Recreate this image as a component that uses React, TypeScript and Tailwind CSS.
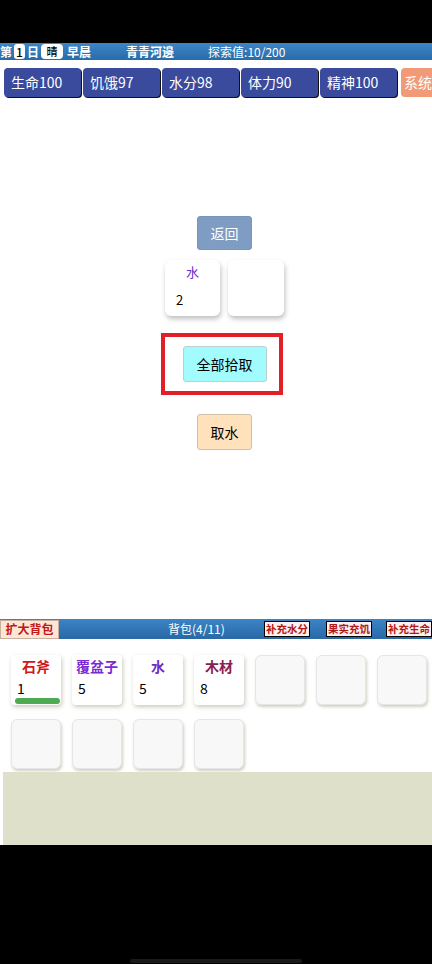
import React from 'react'

const stats = ['生命100', '饥饿97', '水分98', '体力90', '精神100']

const items = [
  { name: '石斧', count: 1, color: 'text-[#d01818]', bar: true },
  { name: '覆盆子', count: 5, color: 'text-[#7b2bd4]', bar: false },
  { name: '水', count: 5, color: 'text-[#6a2bc8]', bar: false },
  { name: '木材', count: 8, color: 'text-[#8a1f4f]', bar: false },
]

function EmptySlot() {
  return (
    <div className="h-[50px] w-[50px] shrink-0 rounded-[6px] border border-[#e6e6e6] bg-[#f8f8f8] shadow-[1px_2px_3px_rgba(150,150,120,0.45)]" />
  )
}

function ToolButton({ label }: { label: string }) {
  return (
    <div className="flex h-[16px] items-center border border-black bg-[#fdf0ee] px-[1px] text-[10.5px] font-bold leading-none text-[#b01818]">
      {label}
    </div>
  )
}

export default function App() {
  return (
    <div
      className="flex h-[964px] w-[432px] flex-col overflow-hidden bg-black"
      style={{ fontFamily: '"Noto Sans CJK SC", "Noto Sans", sans-serif' }}
    >
      <div className="h-[43px] shrink-0" />
      <div className="flex h-[802px] shrink-0 flex-col bg-white">
        {/* top status bar */}
        <div className="flex h-[17px] items-center bg-gradient-to-b from-[#3c86c8] to-[#2a6aa8] text-[12px] font-bold leading-none text-white">
          <span>第</span>
          <span className="mx-[2px] flex h-[15px] w-[11px] items-center justify-center rounded-[3px] bg-[#ffffff] text-[12px] font-medium text-[#000000]">
            1
          </span>
          <span>日</span>
          <span className="ml-[2px] flex h-[15px] w-[22px] items-center justify-center rounded-[4px] bg-[#ffffff] text-[11px] font-medium text-[#000000]">
            晴
          </span>
          <span className="ml-[4px]">早晨</span>
          <span className="ml-[35px]">青青河邊</span>
          <span className="ml-[34px] font-normal">探索值:10/200</span>
        </div>

        {/* stats */}
        <div className="mt-[8px] flex gap-[2px] pl-[4px]">
          {stats.map((s) => (
            <div
              key={s}
              className="flex h-[29px] w-[77px] shrink-0 items-center rounded-[4px] bg-[#3a4a9c] pl-[7px] text-[14px] text-white shadow-[1px_1px_0_#111]"
            >
              {s}
            </div>
          ))}
          <div className="ml-[2px] flex h-[29px] w-[60px] shrink-0 items-center rounded-[4px] bg-[#f09a78] pl-[3px] text-[14px] text-white">
            系统
          </div>
        </div>

        {/* center actions */}
        <div className="mt-[119px] flex flex-col items-center pl-[17px]">
          <div className="flex h-[34px] w-[55px] items-center justify-center rounded-[3px] border border-[#7896bc] bg-[#7f9cc2] text-[14px] text-white">
            返回
          </div>
          <div className="mt-[10px] flex gap-[8px]">
            <div className="relative h-[56px] w-[55px] rounded-[6px] bg-white shadow-[1px_3px_5px_rgba(0,0,0,0.25)]">
              <div className="pt-[2px] text-center text-[13px] text-[#6a2bc8]">水</div>
              <div className="absolute left-[11px] top-[30px] text-[13px] text-black">2</div>
            </div>
            <div className="h-[56px] w-[56px] rounded-[6px] bg-white shadow-[1px_3px_5px_rgba(0,0,0,0.25)]" />
          </div>
          <div className="ml-[-6px] mt-[17px] flex h-[62px] w-[122px] items-center justify-center border-[4px] border-[#e21e26]">
            <div className="ml-[6px] flex h-[36px] w-[84px] items-center justify-center rounded-[3px] border border-[#b8d0d0] bg-[#a2fbfd] text-[14px] text-black">
              全部拾取
            </div>
          </div>
          <div className="mt-[19px] flex h-[36px] w-[55px] items-center justify-center rounded-[3px] border border-[#cfc0a8] bg-[#ffe2bc] text-[14px] text-black">
            取水
          </div>
        </div>

        {/* backpack */}
        <div className="mt-[169px] flex h-[20px] items-center bg-gradient-to-b from-[#3a84c6] to-[#2a68a6] text-[12px] text-white">
          <div className="flex h-[19px] w-[59px] items-center justify-center border border-[#c8b0a0] bg-[#fde6d6] text-[12px] font-bold text-[#c01818]">
            扩大背包
          </div>
          <span className="ml-[109px]">背包(4/11)</span>
          <div className="ml-auto flex items-center">
            <ToolButton label="补充水分" />
            <div className="w-[16px]" />
            <ToolButton label="果实充饥" />
            <div className="w-[14px]" />
            <ToolButton label="补充生命" />
          </div>
        </div>

        <div className="mt-[16px] grid grid-cols-[repeat(7,50px)] gap-x-[11px] gap-y-[14px] pl-[11px]">
          {items.map((it) => (
            <div
              key={it.name}
              className="relative h-[50px] w-[50px] rounded-[4px] bg-white shadow-[1px_2px_4px_rgba(150,150,120,0.5)]"
            >
              <div className={`pt-[2px] text-center text-[14px] font-bold leading-[18px] ${it.color}`}>{it.name}</div>
              <div className="absolute left-[6px] top-[24px] text-[14px] leading-[18px] text-black">{it.count}</div>
              {it.bar && <div className="absolute bottom-[1px] left-[4px] h-[6px] w-[45px] rounded-full bg-[#4cab52]" />}
            </div>
          ))}
          <EmptySlot />
          <EmptySlot />
          <EmptySlot />
          <EmptySlot />
          <EmptySlot />
          <EmptySlot />
          <EmptySlot />
        </div>

        <div className="ml-[3px] mt-[3px] flex-1 bg-[#dfe0ca]" />
      </div>
      <div className="flex flex-1 items-end justify-center pb-[1px]">
        <div className="h-[4px] w-[172px] rounded-full bg-[#1a1a1a]" />
      </div>
    </div>
  )
}
